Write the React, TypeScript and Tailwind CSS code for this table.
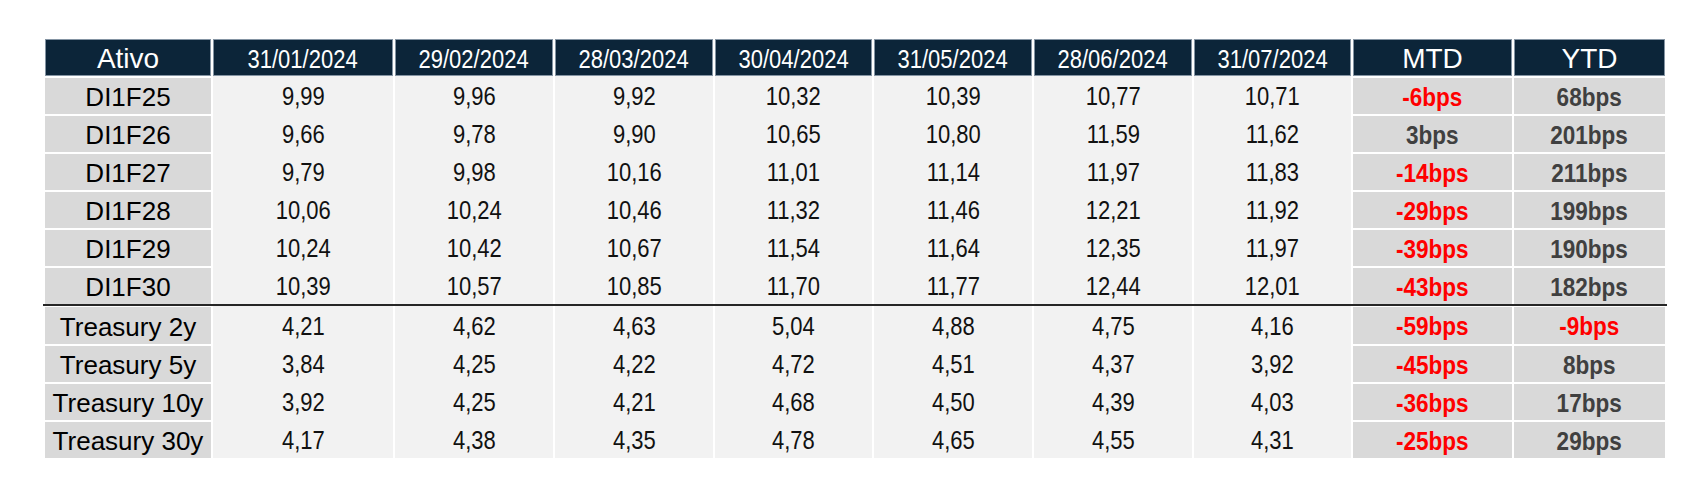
const dates = [
  "31/01/2024",
  "29/02/2024",
  "28/03/2024",
  "30/04/2024",
  "31/05/2024",
  "28/06/2024",
  "31/07/2024",
];

type Row = { name: string; values: string[]; mtd: string; ytd: string };

const diRows: Row[] = [
  { name: "DI1F25", values: ["9,99", "9,96", "9,92", "10,32", "10,39", "10,77", "10,71"], mtd: "-6bps", ytd: "68bps" },
  { name: "DI1F26", values: ["9,66", "9,78", "9,90", "10,65", "10,80", "11,59", "11,62"], mtd: "3bps", ytd: "201bps" },
  { name: "DI1F27", values: ["9,79", "9,98", "10,16", "11,01", "11,14", "11,97", "11,83"], mtd: "-14bps", ytd: "211bps" },
  { name: "DI1F28", values: ["10,06", "10,24", "10,46", "11,32", "11,46", "12,21", "11,92"], mtd: "-29bps", ytd: "199bps" },
  { name: "DI1F29", values: ["10,24", "10,42", "10,67", "11,54", "11,64", "12,35", "11,97"], mtd: "-39bps", ytd: "190bps" },
  { name: "DI1F30", values: ["10,39", "10,57", "10,85", "11,70", "11,77", "12,44", "12,01"], mtd: "-43bps", ytd: "182bps" },
];

const treasuryRows: Row[] = [
  { name: "Treasury 2y", values: ["4,21", "4,62", "4,63", "5,04", "4,88", "4,75", "4,16"], mtd: "-59bps", ytd: "-9bps" },
  { name: "Treasury 5y", values: ["3,84", "4,25", "4,22", "4,72", "4,51", "4,37", "3,92"], mtd: "-45bps", ytd: "8bps" },
  { name: "Treasury 10y", values: ["3,92", "4,25", "4,21", "4,68", "4,50", "4,39", "4,03"], mtd: "-36bps", ytd: "17bps" },
  { name: "Treasury 30y", values: ["4,17", "4,38", "4,35", "4,78", "4,65", "4,55", "4,31"], mtd: "-25bps", ytd: "29bps" },
];

// column widths measured off the sheet, 2px white gutters between them
const cols =
  "grid grid-cols-[166px_180px_158px_158px_157px_158px_158px_157px_159px_151px] gap-x-[2px]";

function Bps({ value }: { value: string }) {
  const negative = value.startsWith("-");
  return (
    <span
      className={`inline-block scale-x-[0.9] text-[25px] font-bold ${
        negative ? "text-[#ff0000]" : "text-[#404040]"
      }`}
    >
      {value}
    </span>
  );
}

function DataRow({ row, first }: { row: Row; first?: boolean }) {
  const side = `flex items-center justify-center bg-[#d9d9d9] bg-clip-padding border-white pt-[2px] ${
    first ? "border-t" : "border-t-2"
  }`;
  return (
    <div className={`${cols} h-[38px]`}>
      <div className={`${side} text-[26px] text-black`}>{row.name}</div>
      {row.values.map((v, i) => (
        <div key={i} className="flex items-center justify-center bg-[#f2f2f2] pt-[3px]">
          <span className="inline-block scale-x-[0.88] text-[25px] text-[#111]">{v}</span>
        </div>
      ))}
      <div className={side}>
        <Bps value={row.mtd} />
      </div>
      <div className={side}>
        <Bps value={row.ytd} />
      </div>
    </div>
  );
}

export default function App() {
  return (
    <div className="h-[478px] w-[1704px] bg-white pl-[45px] pt-[39px] font-['Liberation_Sans',Arial,sans-serif] leading-none">
      <div className="w-[1620px]">
        <div className={`${cols} h-[37px]`}>
          <div className="flex items-center justify-center border border-[#8494a3] bg-[#0c2539] pt-[2px] text-[28px] text-white">
            Ativo
          </div>
          {dates.map((d) => (
            <div
              key={d}
              className="flex items-center justify-center border border-[#8494a3] bg-[#0c2539] pt-[3px] text-white"
            >
              <span className="inline-block scale-x-[0.88] text-[25px]">{d}</span>
            </div>
          ))}
          <div className="flex items-center justify-center border border-[#8494a3] bg-[#0c2539] pt-[2px] text-[28px] text-white">
            MTD
          </div>
          <div className="flex items-center justify-center border border-[#8494a3] bg-[#0c2539] pt-[2px] text-[28px] text-white">
            YTD
          </div>
        </div>
        {diRows.map((r) => (
          <DataRow key={r.name} row={r} />
        ))}
        <div className="-mx-[2px] h-[2px] bg-[#262626]" />
        {treasuryRows.map((r, i) => (
          <DataRow key={r.name} row={r} first={i === 0} />
        ))}
      </div>
    </div>
  );
}
